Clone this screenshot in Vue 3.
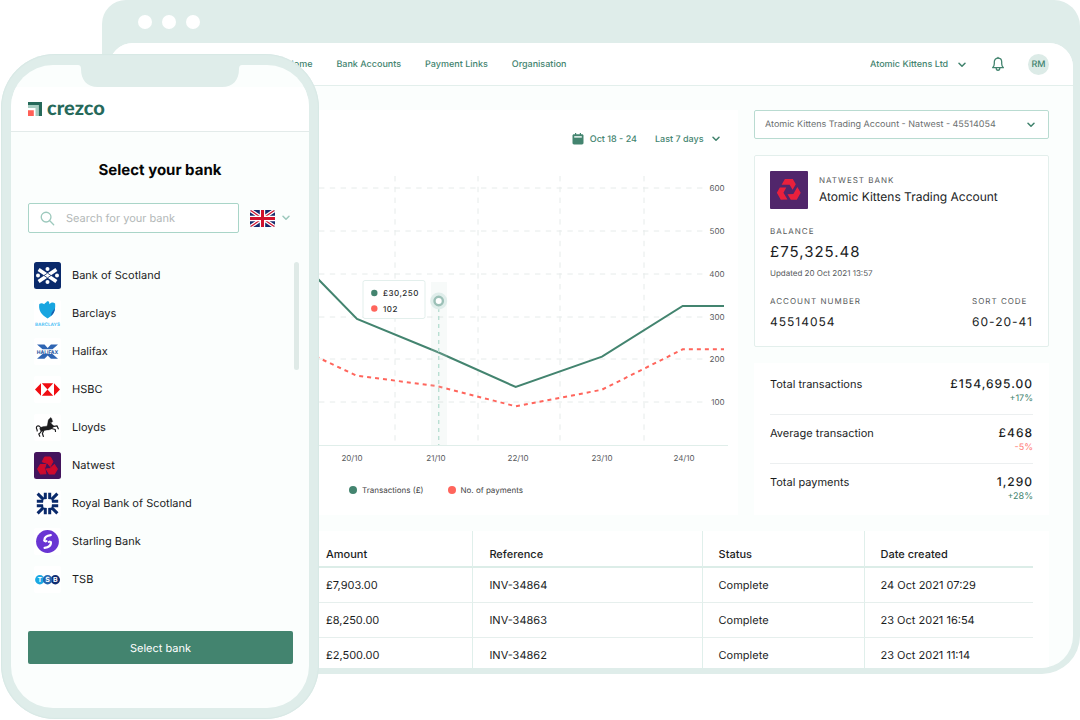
<script setup>
import { ref } from 'vue'

const links = ['Home', 'Bank Accounts', 'Payment Links', 'Organisation']

const banks = [
  { id: 'bos', name: 'Bank of Scotland' },
  { id: 'barclays', name: 'Barclays' },
  { id: 'halifax', name: 'Halifax' },
  { id: 'hsbc', name: 'HSBC' },
  { id: 'lloyds', name: 'Lloyds' },
  { id: 'natwest', name: 'Natwest' },
  { id: 'rbs', name: 'Royal Bank of Scotland' },
  { id: 'starling', name: 'Starling Bank' },
  { id: 'tsb', name: 'TSB' },
]
const selected = ref('')
const query = ref('')

const stats = [
  { label: 'Total transactions', value: '£154,695.00', delta: '+17%' },
  { label: 'Average transaction', value: '£468', delta: '-5%' },
  { label: 'Total payments', value: '1,290', delta: '+28%' },
]

const columns = ['Amount', 'Reference', 'Status', 'Date created']
const rows = [
  ['£7,903.00', 'INV-34864', 'Complete', '24 Oct 2021 07:29'],
  ['£8,250.00', 'INV-34863', 'Complete', '23 Oct 2021 16:54'],
  ['£2,500.00', 'INV-34862', 'Complete', '23 Oct 2021 11:14'],
]

const yTicks = [
  { label: '600', y: 18 },
  { label: '500', y: 61 },
  { label: '400', y: 104 },
  { label: '300', y: 147 },
  { label: '200', y: 189 },
  { label: '100', y: 232 },
]
const xGrid = [262, 345, 427, 511]
const xTicks = [
  { label: '20/10', x: 219 },
  { label: '21/10', x: 303 },
  { label: '22/10', x: 385 },
  { label: '23/10', x: 469 },
  { label: '24/10', x: 551 },
]
const rays = [0, 90, 180, 270]
const turns = [0, 120, 240]
</script>

<template>
  <div class="stage">
    <div class="browser">
      <div class="dots"><i></i><i></i><i></i></div>
      <div class="window">
        <header class="topbar">
          <nav class="links">
            <a v-for="l in links" :key="l" href="#">{{ l }}</a>
          </nav>
          <div class="account">
            <label class="pick org">
              <select aria-label="Organisation"><option>Atomic Kittens Ltd</option></select>
              <svg class="chev" viewBox="0 0 8 6"><path d="M1 1.2 4 4.3 7 1.2" /></svg>
            </label>
            <button class="bell" aria-label="Notifications">
              <svg viewBox="0 0 14 16">
                <path d="M1.600 11.700h10.800c-1.200-1-1.700-2.100-1.700-3.900V6C10.700 3.700 9.200 2.200 7 2.200S3.300 3.700 3.300 6v1.800c0 1.800-.5 2.900-1.700 3.900z" />
                <path d="M7 2.200V1.300M5.200 12c0 3 3.600 3 3.600 0" />
              </svg>
            </button>
            <span class="avatar">RM</span>
          </div>
        </header>

        <main class="content">
          <div class="upper">
            <section class="chart">
              <div class="tools">
                <button class="range">
                  <svg class="cal" viewBox="0 0 12 12">
                    <path d="M2 1.200h1V0h1.200v1.200h3.600V0H9v1.200h1c.8 0 1.500.6 1.500 1.400v7.400c0 .8-.7 1.400-1.500 1.400H2c-.8 0-1.500-.6-1.500-1.400V2.600c0-.8.7-1.400 1.500-1.400z" />
                    <path class="slot" d="M2.200 3h7.600v1.700H2.200z" />
                  </svg>
                  Oct 18 - 24
                </button>
                <label class="pick">
                  <select aria-label="Period"><option>Last 7 days</option></select>
                  <svg class="chev" viewBox="0 0 8 6"><path d="M1 1.2 4 4.3 7 1.2" /></svg>
                </label>
              </div>

              <svg class="plot" viewBox="0 0 605 300">
                <g class="grid">
                  <line v-for="t in yTicks" :key="t.label" x1="24" x2="572" :y1="t.y" :y2="t.y" />
                  <line v-for="x in xGrid" :key="x" :x1="x" :x2="x" y1="6" y2="273" />
                </g>
                <line class="axis" x1="16" x2="595" y1="275.500" y2="275.500" />
                <path class="green" d="M147 69 186 110 224 149 305.700 182.500 382.700 217 469 186.700 549.700 136H591" />
                <path class="red" d="M147 168 186 188 223.700 205.700 303.700 216 382.700 236.300 469 219.700 549.700 179.300H591" />
                <rect class="band" x="298" y="112" width="16" height="163" />
                <line class="cursor" x1="305.700" x2="305.700" y1="138" y2="275" />
                <circle class="halo" cx="305.700" cy="131" r="8.500" />
                <circle class="knob" cx="305.700" cy="131" r="4.200" />
                <g class="tip">
                  <rect x="230" y="110.500" width="62" height="38" rx="2" />
                  <circle class="g" cx="241.300" cy="123" r="3.200" />
                  <circle class="r" cx="241.300" cy="138.500" r="3.200" />
                  <text x="250" y="126">£30,250</text>
                  <text x="250" y="142">102</text>
                </g>
                <text v-for="t in yTicks" :key="'l' + t.label" class="tick end" x="591.500" :y="t.y + 3">{{ t.label }}</text>
                <text v-for="t in xTicks" :key="t.label" class="tick mid" :x="t.x" y="291">{{ t.label }}</text>
              </svg>

              <div class="legend">
                <span><i></i>Transactions (£)</span>
                <span><i class="alt"></i>No. of payments</span>
              </div>
            </section>

            <aside class="side">
              <label class="pick boxed">
                <select aria-label="Account"><option>Atomic Kittens Trading Account - Natwest - 45514054</option></select>
                <svg class="chev" viewBox="0 0 8 6"><path d="M1 1.200 4 4.300 7 1.200" /></svg>
              </label>

              <section class="card">
                <div class="bank">
                  <svg class="natwest" viewBox="0 0 38 38">
                    <rect width="38" height="38" rx="1" fill="#51266b" />
                    <path v-for="a in turns" :key="a" :transform="`rotate(${a} 18.800 19.500)`" fill="#e9203c" d="M11.600 13.800 14.900 8h7.900l3 5.200-3.200 5.600-3-5z" />
                  </svg>
                  <div>
                    <p class="cap">NATWEST BANK</p>
                    <h2>Atomic Kittens Trading Account</h2>
                  </div>
                </div>
                <p class="cap">BALANCE</p>
                <p class="balance">£75,325.48</p>
                <p class="updated">Updated 20 Oct 2021 13:57</p>
                <div class="ids">
                  <div><p class="cap">ACCOUNT NUMBER</p><p class="num">45514054</p></div>
                  <div><p class="cap">SORT CODE</p><p class="num">60-20-41</p></div>
                </div>
              </section>

              <dl class="stats">
                <div v-for="s in stats" :key="s.label">
                  <dt>{{ s.label }}</dt>
                  <dd>{{ s.value }}<small :class="{ down: s.delta[0] === '-' }">{{ s.delta }}</small></dd>
                </div>
              </dl>
            </aside>
          </div>

          <section class="ledger">
            <table>
              <thead>
                <tr><th v-for="c in columns" :key="c" scope="col">{{ c }}</th></tr>
              </thead>
              <tbody>
                <tr v-for="r in rows" :key="r[1]"><td v-for="c in r" :key="c">{{ c }}</td></tr>
              </tbody>
            </table>
          </section>
        </main>
      </div>
    </div>

    <div class="phone">
      <div class="screen">
        <div class="notch">
          <svg viewBox="0 0 164 22"><path d="M0 0Q3 0 3 4C3 15 9 22 20 22H144C155 22 161 15 161 4Q161 0 164 0Z" /></svg>
        </div>
        <div class="brand">
          <svg viewBox="0 0 14 14">
            <path fill="#26695a" d="M0 0h14v14h-3.500V3H0z" />
            <path fill="#a6cdc1" d="M0 3h10.500v11H7.500V6H0z" />
            <path fill="#ff5f56" d="M0 8.300h5.800V14H0z" />
          </svg>
          <span>crezco</span>
        </div>
        <h1>Select your bank</h1>
        <div class="search">
          <label class="field">
            <svg viewBox="0 0 16 16"><circle cx="6.500" cy="6.500" r="5.200" /><path d="m10.400 10.400 4.200 4.200" /></svg>
            <input v-model="query" type="text" placeholder="Search for your bank" aria-label="Search for your bank" />
          </label>
          <button class="country" aria-label="Country">
            <svg class="flag" viewBox="0 0 25 17">
              <path fill="#16296b" d="M0 0h25v17H0z" />
              <path stroke="#fff" stroke-width="3.600" d="M0 0 25 17M25 0 0 17" />
              <path stroke="#d1122e" stroke-width="1.200" d="M0 0 25 17M25 0 0 17" />
              <path stroke="#fff" stroke-width="5.400" d="M12.500 0v17M0 8.500h25" />
              <path stroke="#d1122e" stroke-width="3" d="M12.500 0v17M0 8.500h25" />
            </svg>
            <svg class="chev pale" viewBox="0 0 8 6"><path d="M1 1.200 4 4.300 7 1.200" /></svg>
          </button>
        </div>

        <div class="list">
          <ul>
            <li v-for="b in banks" :key="b.id">
              <button @click="selected = b.id">
                <svg class="logo" viewBox="0 0 27 27">
                  <rect width="27" height="27" rx="2" fill="#fff" />
                  <g v-if="b.id === 'bos'">
                    <rect width="27" height="27" rx="2.500" fill="#0a2a6b" />
                    <path stroke="#fff" stroke-width="3.600" d="M4.600 7.600 22.400 19.400M22.400 7.600 4.600 19.400" />
                    <path stroke="#0a2a6b" stroke-width=".8" d="m10 13.500 3.500-2.400 3.500 2.400-3.500 2.400z" fill="#fff" />
                    <g fill="#fff"><circle cx="13.500" cy="7" r="2" /><circle cx="13.500" cy="20" r="2" /><circle cx="4" cy="13.500" r="2" /><circle cx="23" cy="13.500" r="2" /></g>
                  </g>
                  <g v-else-if="b.id === 'barclays'">
                    <path fill="#18a5e0" d="M12.200 2.600c.4-1.700 2.600-1.900 3-.2l.2 1.800c1.500-2 3.900-2.200 5.700-.8.5 4.900-.4 9.500-4 12.600l-3.500 2.600-3.600-2.600C6.300 13 4.500 9 5.300 4c1.700-1.200 3.500-1 4.900.3.300-.8 1.100-1.400 2-1.700z" />
                    <path fill="#1c5fae" d="M21 8c-.2 3.500-1.700 6.200-4.200 8l1-3.600z" />
                    <text x="13.500" y="25.500" class="tiny" fill="#55c4f5" font-size="4.600">BARCLAYS</text>
                  </g>
                  <g v-else-if="b.id === 'halifax'">
                    <path fill="#2f65b3" d="M3 6.500h7.500l3.200 3.400 3.200-3.400H24l-5.500 4.700H8.500zM3 20.800h7.500l3.200-3.400 3.200 3.400H24l-5.500-4.700H8.500z" />
                    <text x="13.500" y="15.700" class="tiny" fill="#24559f" font-size="5">HALIFAX</text>
                  </g>
                  <g v-else-if="b.id === 'hsbc'" fill="#f00d12">
                    <path d="m1 13.500 6-6.200v12.400zM26 13.500l-6-6.200v12.400zM7.800 7.300h11.400l-5.700 6.200zM7.800 19.700h11.400l-5.700-6.200z" />
                  </g>
                  <g v-else-if="b.id === 'lloyds'" fill="#1d1d1f" stroke="#1d1d1f" stroke-linecap="round" stroke-linejoin="round">
                    <path stroke-width=".4" d="M6 14.500c1-2.200 4.400-2 7-2.300 1-2.600.8-4.500 1.400-6.400L16.800 3.500l.8.900 1 3.200-.8.800-1.400-.7c.3 1.600 1.600 2.600 3.200 3.900-.2 2.600-2.600 4.200-5.200 4.300-2.200.1-3.400.2-5 1.200C7.300 17.800 5.700 16.700 6 14.500z" />
                    <path fill="none" stroke-width="1.200" d="M18.500 12.600l4.500-.8 1.300 3M17.500 14.500l3.700 1 .3 2M8 16l-1.600 2.600-1.600 1.400 1 2.300M9.600 16.800l-1.200 2.700 1 3M6.500 13.500c-1.500-2.500-4-1.600-4.100 0s1 2 .8 3.500" />
                  </g>
                  <g v-else-if="b.id === 'natwest'">
                    <rect width="27" height="27" rx="2.500" fill="#43145c" />
                    <path v-for="a in turns" :key="a" :transform="`rotate(${a} 13.500 14.700)`" fill="#ce0a2d" d="M8.200 9.800 10.600 5h5.800l2.500 4.600-2.700 5-2.500-3z" stroke="#ce0a2d" stroke-linejoin="round" />
                  </g>
                  <g v-else-if="b.id === 'rbs'" stroke="#0a2a6b" stroke-width="3">
                    <path v-for="a in rays" :key="a" :transform="`rotate(${a} 13.500 13.500)`" d="M11.300 2.800v6.500M15.700 2.800v6.500M3.600 3.600l6 6" />
                    <path fill="#fff" stroke="none" d="m13.500 8.800 3.300 1.400 1.400 3.300-1.400 3.300-3.300 1.400-3.300-1.400-1.400-3.300 1.400-3.300z" />
                    <path stroke="#fff" stroke-width=".7" d="M13.500 2v7M13.500 18v7M2 13.500h7M18 13.500h7" />
                  </g>
                  <g v-else-if="b.id === 'starling'">
                    <circle cx="13.500" cy="13.500" r="11.400" fill="#6935d3" />
                    <path fill="none" stroke="#fff" stroke-width="2.200" stroke-linecap="round" d="M16.800 7.200c-4.500.4-6.400 2.600-6.400 5.200M10.600 19.800c4.500-.4 6.400-2.600 6.400-5.200" />
                    <path fill="none" stroke="#fff" stroke-width="2" stroke-linecap="round" d="M10.400 12.400c.1 1.200 1.400 1.200 2.200.6M17 14.600c-.1-1.200-1.400-1.200-2.200-.6" />
                  </g>
                  <g v-else>
                    <circle cx="5.800" cy="13.700" r="4.700" fill="#1ba8e3" />
                    <circle cx="21.300" cy="13.700" r="4.700" fill="#0f2c71" />
                    <circle cx="13.600" cy="13.700" r="4.700" fill="#2565ae" />
                    <g class="tiny" fill="#fff" font-size="7"><text x="5.800" y="16.300">T</text><text x="13.600" y="16.300">S</text><text x="21.300" y="16.300">B</text></g>
                  </g>
                </svg>
                {{ b.name }}
              </button>
            </li>
          </ul>
          <div class="thumb"></div>
        </div>

        <button class="submit">Select bank</button>
      </div>
    </div>
  </div>
</template>

<style>
body {
  background: #fff;
}
</style>

<style scoped>
.stage {
  --frame: #dfedea;
  --green: #43846f;
  --red: #ff655c;
  --tint: #fbfefd;
  display: grid;
  align-items: start;
  font-family: Inter, "Liberation Sans", sans-serif;
  font-size: 11px;
  text-rendering: geometricPrecision;
  color: #1b1d1e;
}
.stage * {
  box-sizing: border-box;
}
.browser,
.phone {
  grid-area: 1 / 1;
}
button,
select,
input {
  font: inherit;
  color: inherit;
  text-rendering: inherit;
  background: none;
  border: 0;
  margin: 0;
  padding: 0;
}
button {
  display: flex;
  align-items: center;
}
p,
h1,
h2,
dl,
dd,
ul {
  margin: 0;
  padding: 0;
}
svg {
  display: block;
  flex: none;
}

.browser {
  margin-left: 102px;
  padding: 0 7px 6px;
  background: var(--frame);
  border-radius: 24px 26px 38px 38px;
}
.dots {
  display: flex;
  align-items: center;
  gap: 10px;
  height: 43px;
  padding-left: 29px;
}
.dots i {
  width: 14px;
  height: 14px;
  border-radius: 50%;
  background: #fff;
}
.window {
  overflow: hidden;
  border-radius: 24px 24px 32px 32px;
  background: var(--tint);
}
.topbar {
  display: flex;
  justify-content: space-between;
  align-items: center;
  height: 43px;
  padding: 0 24px 0 178px;
  background: #fff;
  border-bottom: 1px solid #e3efec;
  color: var(--green);
  font-size: 10px;
  font-weight: 500;
}
.links {
  display: flex;
  gap: 24px;
}
.links,
.org {
  padding-top: 1px;
  font-size: 9px;
}
.links a {
  color: inherit;
  text-decoration: none;
}
.account {
  display: flex;
  align-items: center;
}
.pick {
  display: flex;
  align-items: center;
  gap: 9px;
}
.pick select {
  appearance: none;
}
.chev {
  width: 8px;
  height: 6px;
  fill: none;
  stroke: var(--green);
  stroke-width: 1.5;
  stroke-linecap: round;
  stroke-linejoin: round;
}
.bell {
  margin: 0 23px 0 25px;
}
.bell svg {
  width: 14px;
  height: 16px;
  fill: none;
  stroke: var(--green);
  stroke-width: 1.3;
  stroke-linecap: round;
  stroke-linejoin: round;
}
.avatar {
  display: grid;
  place-items: center;
  width: 21px;
  height: 21px;
  border-radius: 50%;
  background: #dcebe7;
  font-size: 9px;
}

.content {
  display: grid;
  gap: 16px;
  padding: 24px 24px 0;
}
.upper {
  display: grid;
  grid-template-columns: 1fr 295px;
  gap: 16px;
}
.chart {
  background: #fff;
  min-width: 0;
}
.tools {
  display: flex;
  justify-content: flex-end;
  gap: 18px;
  height: 20px;
  margin: 19px 18px 21px;
  color: var(--green);
  font-size: 9px;
  font-weight: 500;
}
.tools .pick {
  gap: 8px;
}
.range {
  gap: 6px;
}
.cal {
  width: 12px;
  height: 12px;
  fill: var(--green);
}
.cal .slot {
  fill: #d3e6e0;
}
.plot {
  width: 100%;
}
.plot line,
.plot path {
  fill: none;
}
.grid line {
  stroke: #e6ebea;
  stroke-dasharray: 5.4 5.4;
}
.plot .axis {
  stroke: #e0eeea;
}
.plot .green {
  stroke: var(--green);
  stroke-width: 2;
}
.plot .red {
  stroke: var(--red);
  stroke-width: 2;
  stroke-dasharray: 4 4;
}
.band {
  fill: #cbe3dc;
  opacity: 0.16;
}
.cursor {
  stroke: #b9dfd3;
  stroke-width: 1.4;
  stroke-dasharray: 4 4;
}
.halo {
  fill: #dfedea;
}
.knob {
  fill: #fff;
  stroke: #9cc0b7;
  stroke-width: 2.4;
}
.tip rect {
  fill: #fff;
  stroke: #e3efec;
}
.tip .g {
  fill: var(--green);
}
.tip .r {
  fill: var(--red);
}
.tip text {
  font-size: 8px;
  font-weight: 500;
  letter-spacing: 0.5px;
  fill: #2b2e2f;
}
.tick {
  font-size: 8px;
  fill: #55585a;
}
.end {
  text-anchor: end;
}
.mid {
  text-anchor: middle;
}
.legend {
  display: flex;
  gap: 24px;
  padding: 14px 0 0 216px;
  font-size: 8px;
  line-height: 12px;
  color: #3f4344;
}
.legend span {
  display: flex;
  align-items: center;
  gap: 5px;
}
.legend i {
  width: 8px;
  height: 8px;
  border-radius: 50%;
  background: var(--green);
}
.legend .alt {
  background: var(--red);
}

.side {
  display: grid;
  gap: 16px;
  align-content: start;
}
.boxed {
  height: 29px;
  padding: 0 13px 0 10px;
  border: 1px solid #b9dbd1;
  border-radius: 2px;
  background: #fff;
  color: #6b6f70;
  font-size: 9px;
}
.boxed select {
  flex: 1;
  min-width: 0;
}
.card {
  padding: 15px;
  border: 1px solid #e3efec;
  border-radius: 2px;
  background: #fff;
}
.bank {
  display: flex;
  align-items: center;
  gap: 11px;
  margin-bottom: 16px;
}
.natwest {
  width: 38px;
  height: 38px;
}
.cap {
  font-size: 8px;
  line-height: 12px;
  letter-spacing: 1px;
  color: #55585a;
}
h2 {
  margin-top: 2px;
  font-size: 12px;
  line-height: 18px;
  font-weight: 400;
}
.balance {
  margin: 5px 0;
  font-size: 15px;
  line-height: 20px;
  letter-spacing: 1px;
}
.updated {
  font-size: 8px;
  line-height: 12px;
  color: #55585a;
}
.ids {
  display: flex;
  justify-content: space-between;
  margin-top: 16px;
}
.num {
  margin-top: 6px;
  font-size: 12px;
  line-height: 18px;
  letter-spacing: 1px;
}
.stats {
  padding: 3px 16px;
  background: #fff;
}
.stats div {
  display: flex;
  justify-content: space-between;
  padding: 10px 0 9px;
  border-bottom: 1px solid #eceff0;
}
.stats div:last-child {
  border-bottom: 0;
}
dt {
  line-height: 16px;
}
dd {
  font-size: 12px;
  font-weight: 500;
  line-height: 16px;
  letter-spacing: 1px;
  text-align: right;
}
small {
  display: block;
  margin-top: 1px;
  font-size: 9px;
  font-weight: 400;
  line-height: 12px;
  letter-spacing: 0;
  color: var(--green);
}
small.down {
  color: #ff7d76;
}

.ledger {
  padding: 0 16px 0 177px;
  background: #fff;
}
table {
  width: 100%;
  table-layout: fixed;
  border-collapse: separate;
  border-spacing: 0;
}
th,
td {
  height: 35px;
  padding: 0 0 0 16px;
  text-align: left;
  border-bottom: 1px solid #e6efed;
  border-right: 1px solid #e0efeb;
}
th {
  height: 37px;
  padding-top: 10px;
  font-weight: 500;
  border-bottom: 2px solid #dcede8;
}
th:nth-child(1) {
  width: 22.6%;
}
th:nth-child(2) {
  width: 31.7%;
}
th:nth-child(3) {
  width: 22.4%;
}
th:last-child,
td:last-child {
  border-right: 0;
}
tr:last-child td {
  height: 30px;
  padding-top: 4px;
  border-bottom: 0;
}

.phone {
  width: 318px;
  margin: 54px 0 0 1px;
  padding: 11px 10px;
  border-radius: 54px;
  background: var(--frame);
  box-shadow: inset 0 0 1px 1px #d8e8e5;
}
.screen {
  overflow: hidden;
  padding-bottom: 44px;
  border-radius: 42px;
  background: var(--tint);
}
.notch {
  display: flex;
  justify-content: center;
  height: 22px;
}
.notch svg {
  width: 164px;
  height: 22px;
  fill: var(--frame);
}
.brand {
  display: flex;
  align-items: center;
  gap: 5px;
  height: 45px;
  padding-left: 17px;
  background: #fff;
  border-bottom: 1px solid #e3ebea;
}
.brand svg {
  width: 14px;
  height: 14px;
}
.brand span {
  font-family: Lato, sans-serif;
  font-size: 20px;
  font-weight: 900;
  line-height: 20px;
  padding-bottom: 2px;
  color: #26695a;
}
h1 {
  margin: 28px 0 23px;
  font-size: 15px;
  line-height: 20px;
  font-weight: 700;
  text-align: center;
  color: #050606;
}
.search {
  display: flex;
  align-items: center;
  gap: 11px;
  padding: 0 19px 0 17px;
}
.field {
  flex: 1;
  display: flex;
  align-items: center;
  gap: 11px;
  height: 30px;
  padding-left: 11px;
  border: 1px solid #a9d5c8;
  border-radius: 2px;
  background: #fff;
}
.field svg {
  width: 15px;
  height: 15px;
  fill: none;
  stroke: #9dc9bd;
  stroke-width: 1.4;
  stroke-linecap: round;
}
.field input {
  flex: 1;
  min-width: 0;
  outline: 0;
}
.field input::placeholder {
  color: #b3b8b8;
  opacity: 1;
}
.country {
  gap: 7px;
}
.flag {
  width: 25px;
  height: 17px;
  border-radius: 2px;
}
.chev.pale {
  stroke: #9dc9bd;
}
.list {
  display: flex;
  justify-content: space-between;
  align-items: flex-start;
  margin-top: 23px;
  padding: 0 10px 0 23px;
}
ul {
  list-style: none;
}
li button {
  gap: 11px;
  height: 38px;
}
.logo {
  width: 27px;
  height: 27px;
}
.tiny {
  font-weight: 700;
  text-anchor: middle;
}
.thumb {
  width: 5px;
  height: 108px;
  margin-top: 6px;
  border-radius: 3px;
  background: #dfeae7;
}
.submit {
  justify-content: center;
  width: calc(100% - 33px);
  height: 33px;
  margin: 33px 16px 0 17px;
  border-radius: 2px;
  background: var(--green);
  color: #fff;
}
</style>
